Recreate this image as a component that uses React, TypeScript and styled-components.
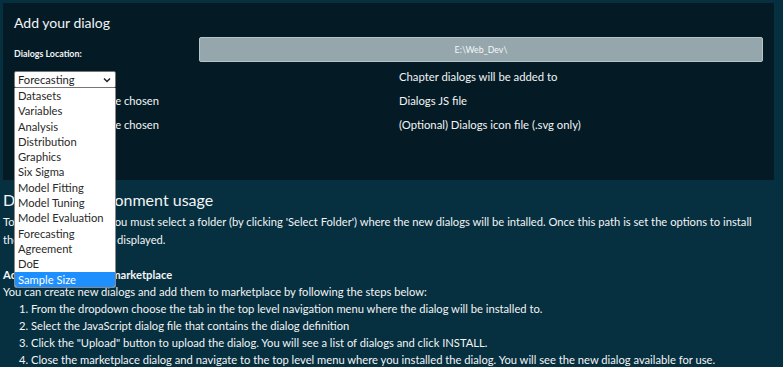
import React from 'react';
import styled, { createGlobalStyle } from 'styled-components';

const GlobalStyle = createGlobalStyle`
  html, body {
    margin: 0;
    padding: 0;
    background: #062f3f;
  }
  body {
    font-family: Lato, "Open Sans", sans-serif;
    color: #f2f4f5;
  }
`;

const Page = styled.div`
  padding: 3px 9px 0 3px;
  width: 783px;
  height: 367px;
  box-sizing: border-box;
  overflow: hidden;
`;

const Card = styled.div`
  background: #041b26;
  height: 177px;
  box-sizing: border-box;
  padding: 10px 11px 0 11px;
`;

const Title = styled.h2`
  margin: 0 0 4px 0;
  font-size: 14px;
  font-weight: 400;
  line-height: 20px;
`;

const FormGrid = styled.div`
  display: grid;
  grid-template-columns: 185px 200px 1fr;
  grid-template-rows: 25px 27px 23px 24px;
`;

const Cell = styled.div<{ $span?: string; $top?: number }>`
  grid-column: ${(p) => p.$span || 'auto'};
  display: flex;
  align-items: ${(p) => (p.$top !== undefined ? 'flex-start' : 'center')};
  padding-top: ${(p) => p.$top || 0}px;
  position: relative;
`;

const Label = styled.div`
  font-size: 8.9px;
  font-weight: 700;
  line-height: 11px;
`;

const PathBar = styled.div`
  grid-column: 2 / 4;
  background: #95a6ad;
  border: 1px solid #b7c4c9;
  border-radius: 2px;
  box-sizing: border-box;
  display: flex;
  align-items: center;
  justify-content: center;
  font-size: 8.8px;
  color: #f4f7f8;
`;

const Hint = styled.div<{ $top?: number }>`
  grid-column: 3 / 4;
  font-size: 11.3px;
  line-height: 17px;
  display: flex;
  align-items: ${(p) => (p.$top !== undefined ? 'flex-start' : 'center')};
  padding-top: ${(p) => p.$top || 0}px;
`;

const SelectWrap = styled.div`
  position: relative;
`;

const SelectBox = styled.div`
  width: 102px;
  height: 17px;
  background: #ffffff;
  border: 1px solid #767676;
  border-radius: 2px;
  box-sizing: border-box;
  display: flex;
  align-items: center;
  justify-content: space-between;
  padding: 0 4px 0 3px;
  color: #1d1d1d;
  font-size: 11.2px;
`;

const DropList = styled.ul`
  position: absolute;
  left: 0;
  top: 17px;
  z-index: 10;
  width: 102px;
  margin: 0;
  padding: 0;
  list-style: none;
  background: #ffffff;
  border: 1px solid #8a8a8a;
  border-top: none;
  border-radius: 0 0 3px 3px;
  box-sizing: border-box;
  overflow: hidden;
`;

const DropItem = styled.li<{ $selected?: boolean }>`
  height: 15.3px;
  line-height: 15.3px;
  padding-left: 3px;
  font-size: 11.2px;
  color: ${(p) => (p.$selected ? '#ffffff' : '#2a2a2a')};
  background: ${(p) => (p.$selected ? '#1e8fff' : 'transparent')};
  white-space: nowrap;
`;

const FileInput = styled.div`
  display: flex;
  align-items: center;
  gap: 4px;
  font-size: 11.2px;
`;

const FileButton = styled.span`
  display: inline-block;
  padding: 1px 6px;
  background: #efefef;
  border: 1px solid #767676;
  border-radius: 2px;
  color: #111;
  font-size: 11px;
`;

const Section = styled.div`
  padding: 10px 10px 0 0;
`;

const Heading = styled.h3`
  margin: 0 0 3px 0;
  font-size: 16px;
  font-weight: 400;
  line-height: 20px;
`;

const Para = styled.p`
  margin: 0 0 16.5px 0;
  font-size: 11.2px;
  line-height: 18px;
`;

const SubHeading = styled.div`
  font-size: 11.2px;
  font-weight: 700;
  line-height: 17px;
`;

const Intro = styled.div`
  font-size: 11.2px;
  line-height: 17px;
`;

const Steps = styled.ol`
  margin: 0;
  padding-left: 28px;
  font-size: 11.2px;
  line-height: 17px;
`;

const options = [
  'Datasets',
  'Variables',
  'Analysis',
  'Distribution',
  'Graphics',
  'Six Sigma',
  'Model Fitting',
  'Model Tuning',
  'Model Evaluation',
  'Forecasting',
  'Agreement',
  'DoE',
  'Sample Size',
];

const Chevron = () => (
  <svg width="8" height="6" viewBox="0 0 8 6">
    <path d="M1 1.5 L4 4.5 L7 1.5" fill="none" stroke="#222" strokeWidth="1.5" />
  </svg>
);

export default function App() {
  return (
    <Page>
      <GlobalStyle />
      <Card>
        <Title>Add your dialog</Title>
        <FormGrid>
          <Cell $top={11}>
            <Label>Dialogs Location:</Label>
          </Cell>
          <PathBar>E:\Web_Dev\</PathBar>

          <Cell $span="1 / 3" $top={9}>
            <SelectWrap>
              <SelectBox>
                <span>Forecasting</span>
                <Chevron />
              </SelectBox>
              <DropList>
                {options.map((o) => (
                  <DropItem key={o} $selected={o === 'Sample Size'}>
                    {o}
                  </DropItem>
                ))}
              </DropList>
            </SelectWrap>
          </Cell>
          <Hint $top={6}>Chapter dialogs will be added to</Hint>

          <Cell $span="1 / 3">
            <FileInput>
              <FileButton>Choose File</FileButton>
              <span>No file chosen</span>
            </FileInput>
          </Cell>
          <Hint>Dialogs JS file</Hint>

          <Cell $span="1 / 3">
            <FileInput>
              <FileButton>Choose File</FileButton>
              <span>No file chosen</span>
            </FileInput>
          </Cell>
          <Hint>(Optional) Dialogs icon file (.svg only)</Hint>
        </FormGrid>
      </Card>

      <Section>
        <Heading>Developer environment usage</Heading>
        <Para>
          To install new dialogs you must select a folder (by clicking 'Select Folder') where the new dialogs will be
          intalled. Once this path is set the options to install the new dialogs will be displayed.
        </Para>
        <SubHeading>Adding dialogs to the marketplace</SubHeading>
        <Intro>You can create new dialogs and add them to marketplace by following the steps below:</Intro>
        <Steps>
          <li>From the dropdown choose the tab in the top level navigation menu where the dialog will be installed to.</li>
          <li>Select the JavaScript dialog file that contains the dialog definition</li>
          <li>Click the "Upload" button to upload the dialog. You will see a list of dialogs and click INSTALL.</li>
          <li>
            Close the marketplace dialog and navigate to the top level menu where you installed the dialog. You will see
            the new dialog available for use.
          </li>
        </Steps>
      </Section>
    </Page>
  );
}
